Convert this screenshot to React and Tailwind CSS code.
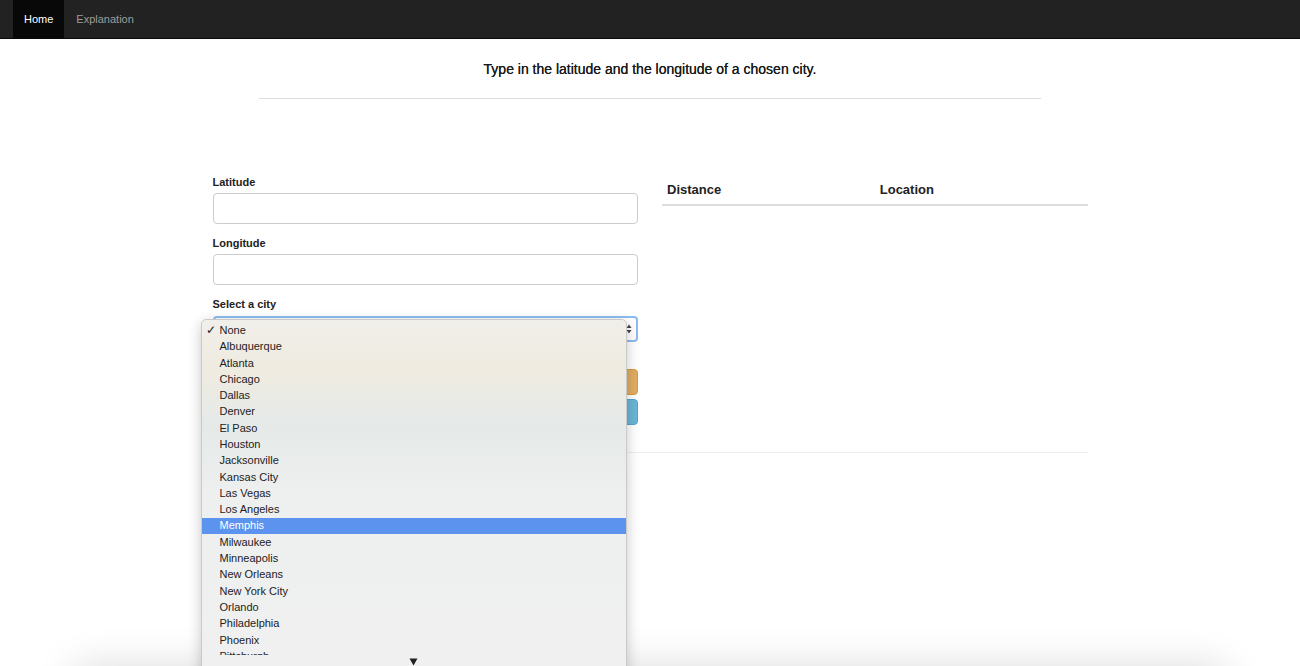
import React from "react";

const cities = [
  "None",
  "Albuquerque",
  "Atlanta",
  "Chicago",
  "Dallas",
  "Denver",
  "El Paso",
  "Houston",
  "Jacksonville",
  "Kansas City",
  "Las Vegas",
  "Los Angeles",
  "Memphis",
  "Milwaukee",
  "Minneapolis",
  "New Orleans",
  "New York City",
  "Orlando",
  "Philadelphia",
  "Phoenix",
  "Pittsburgh",
];

const CityMenu = () => (
  <div className="absolute left-[-12px] top-[3px] z-20 h-[360px] w-[426px] overflow-hidden rounded-t-[5px] border border-[#c9c9c9] bg-[linear-gradient(180deg,#f1efea_0%,#efebe0_14%,#e5eae9_30%,#eeefef_48%,#f0f0f0_100%)] shadow-[0_4px_14px_rgba(0,0,0,0.22)]">
    <ul className="pt-[2px]">
      {cities.map((c) => (
        <li
          key={c}
          className={`relative flex h-[16.3px] items-center pl-[18px] text-[11px] ${
            c === "Memphis" ? "bg-[#5b93ee] text-white" : "text-[#222]"
          }`}
        >
          {c === "None" && (
            <span className="absolute left-[4px] text-[12px] text-[#222]">✓</span>
          )}
          {c}
        </li>
      ))}
    </ul>
    {/* scroll-down arrow strip */}
    <div className="absolute left-0 right-0 top-[335px] flex h-[30px] justify-center bg-[#f0f0f0] pt-[3px]">
      <svg width="9" height="8" viewBox="0 0 9 8">
        <path d="M0.5 0.5 L8.5 0.5 L4.5 7.5 Z" fill="#222" />
      </svg>
    </div>
  </div>
);

export default function App() {
  return (
    <div className="relative min-h-[666px] overflow-hidden bg-white font-['Liberation_Sans',Arial,sans-serif] text-[#222]">
      {/* navbar */}
      <nav className="flex h-[39px] border-b border-[#080808] bg-[#222] pl-[13px]">
        <a className="flex items-center bg-[#080808] px-[11px] text-[11px] text-white">Home</a>
        <a className="flex items-center px-[12px] text-[11px] text-[#9d9d9d]">Explanation</a>
      </nav>

      <div className="mx-auto w-[782px] pt-[20px]">
        <p className="text-center text-[14px] leading-[20px] text-[#1a1a1a] [text-shadow:0_0_0.4px_#1a1a1a]">
          Type in the latitude and the longitude of a chosen city.
        </p>
        <div className="mt-[19px] h-px bg-[#dedede]" />
      </div>

      <div className="mx-auto mt-[76px] w-[875px]">
        <div className="grid grid-cols-2 gap-[24px]">
          <div>
            <label className="block text-[11px] font-bold leading-[15px]">Latitude</label>
            <div className="mt-[3px] h-[31px] rounded-[4px] border border-[#ccc] bg-white" />

            <label className="mt-[12px] block text-[11px] font-bold leading-[15px]">Longitude</label>
            <div className="mt-[3px] h-[31px] rounded-[4px] border border-[#ccc] bg-white" />

            <label className="mt-[12px] block text-[11px] font-bold leading-[15px]">Select a city</label>
            <div className="relative mt-[4px]">
              <div className="flex h-[26px] items-center justify-end rounded-[4px] border-2 border-[#8cbcf0] bg-white pr-[4px]">
                <svg width="6" height="10" viewBox="0 0 6 10">
                  <path d="M3 0.5 L5.5 4 L0.5 4 Z" fill="#444" />
                  <path d="M3 9.5 L5.5 6 L0.5 6 Z" fill="#444" />
                </svg>
              </div>
              <CityMenu />
            </div>

            <button className="mt-[27px] block h-[26px] w-full rounded-[4px] border border-[#d99a3f] bg-[#e1ad62]" />
            <button className="mt-[4px] block h-[26px] w-full rounded-[4px] border border-[#4ea6cb] bg-[#6cb6d6]" />
          </div>

          <div>
            <table className="w-full border-collapse text-left">
              <thead>
                <tr className="border-b-2 border-[#ddd]">
                  <th className="h-[30px] w-1/2 pl-[5px] align-middle text-[13px] font-bold">Distance</th>
                  <th className="h-[30px] pl-[5px] align-middle text-[13px] font-bold">Location</th>
                </tr>
              </thead>
            </table>
          </div>
        </div>
        <div className="mt-[27px] h-px bg-[#eee]" />
      </div>

      {/* shadow of the window below */}
      <div className="pointer-events-none absolute bottom-[-40px] left-[70px] right-[70px] h-[40px] rounded-[20px] shadow-[0_0_40px_rgba(0,0,0,0.14)]" />
    </div>
  );
}
